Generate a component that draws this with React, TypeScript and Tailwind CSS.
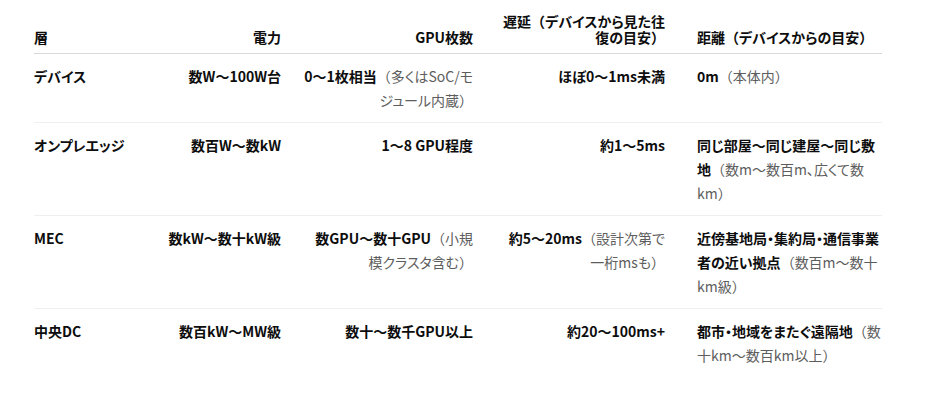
type Cell = { main: string; sub?: string };
type Seg = { t: string; sub: boolean };

// "\n" marks where the reference breaks the line
const rows: Cell[][] = [
  [
    { main: "デバイス" },
    { main: "数W〜100W台" },
    { main: "0〜1枚相当", sub: "（多くはSoC/モ\nジュール内蔵）" },
    { main: "ほぼ0〜1ms未満" },
    { main: "0m", sub: "（本体内）" },
  ],
  [
    { main: "オンプレエッジ" },
    { main: "数百W〜数kW" },
    { main: "1〜8 GPU程度" },
    { main: "約1〜5ms" },
    { main: "同じ部屋〜同じ建屋〜同じ敷\n地", sub: "（数m〜数百m、広くて数\nkm）" },
  ],
  [
    { main: "MEC" },
    { main: "数kW〜数十kW級" },
    { main: "数GPU〜数十GPU", sub: "（小規\n模クラスタ含む）" },
    { main: "約5〜20ms", sub: "（設計次第で\n一桁msも）" },
    { main: "近傍基地局・集約局・通信事業\n者の近い拠点", sub: "（数百m〜数十\nkm級）" },
  ],
  [
    { main: "中央DC" },
    { main: "数百kW〜MW級" },
    { main: "数十〜数千GPU以上" },
    { main: "約20〜100ms+" },
    { main: "都市・地域をまたぐ遠隔地", sub: "（数\n十km〜数百km以上）" },
  ],
];

const headers = ["層", "電力", "GPU枚数", "遅延（デバイスから見た往\n復の目安）", "距離（デバイスからの目安）"];
const align = ["items-start", "items-end", "items-end", "items-end", "items-start"];
const pad = ["pl-0 pr-4", "px-4", "px-4", "px-4", "pl-4 pr-0"];

function toLines(cell: Cell): Seg[][] {
  const lines: Seg[][] = [[]];
  const segs: Seg[] = [{ t: cell.main, sub: false }];
  if (cell.sub) segs.push({ t: cell.sub, sub: true });
  segs.forEach((s) => {
    s.t.split("\n").forEach((p, i) => {
      if (i > 0) lines.push([]);
      if (p) lines[lines.length - 1].push({ t: p, sub: s.sub });
    });
  });
  return lines;
}

// full-width brackets keep their full advance, kana stay proportional
function Jp({ text }: { text: string }) {
  const parts = text.split(/([（）])/);
  return (
    <>
      {parts.map((p, i) =>
        p === "（" || p === "）" ? (
          <span key={i} className="[font-feature-settings:normal]">
            {p}
          </span>
        ) : (
          p
        )
      )}
    </>
  );
}

function Lines({ cell, alignCls }: { cell: Cell; alignCls: string }) {
  return (
    <div className={`flex flex-col ${alignCls}`}>
      {toLines(cell).map((line, i) => (
        <div key={i} className="whitespace-nowrap">
          {line.map((s, j) => (
            <span key={j} className={s.sub ? "font-normal text-[#5d5d5d]" : "font-bold text-[#0d0d0d]"}>
              <Jp text={s.t} />
            </span>
          ))}
        </div>
      ))}
    </div>
  );
}

export default function App() {
  return (
    <div
      className="w-[928px] h-[407px] bg-white pl-[34px] pt-[13px] text-[14px] [font-feature-settings:'palt'] overflow-hidden"
      style={{ fontFamily: '"Noto Sans CJK JP", "Noto Sans", sans-serif' }}
    >
      <table className="w-[848px] table-fixed border-collapse">
        <colgroup>
          <col className="w-[116px]" />
          <col className="w-[147px]" />
          <col className="w-[192px]" />
          <col className="w-[192px]" />
          <col className="w-[201px]" />
        </colgroup>
        <thead>
          <tr className="border-b border-[#d9d9d9]">
            {headers.map((h, i) => (
              <th key={h} className={`align-bottom pb-2 pt-0 leading-4 ${pad[i]}`}>
                <Lines cell={{ main: h }} alignCls={align[i]} />
              </th>
            ))}
          </tr>
        </thead>
        <tbody>
          {rows.map((row, r) => (
            <tr key={r} className={r < rows.length - 1 ? "border-b border-[#efefef]" : ""}>
              {row.map((cell, i) => (
                <td key={i} className={`align-top py-[10px] leading-6 ${pad[i]}`}>
                  <Lines cell={cell} alignCls={align[i]} />
                </td>
              ))}
            </tr>
          ))}
        </tbody>
      </table>
    </div>
  );
}
